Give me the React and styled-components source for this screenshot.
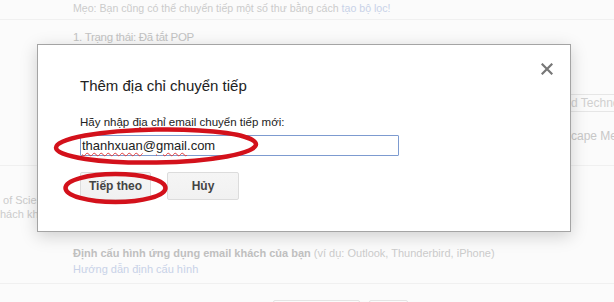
import React from 'react';
import styled, { createGlobalStyle } from 'styled-components';

const GlobalStyle = createGlobalStyle`
  html, body {
    margin: 0;
    padding: 0;
    background: #fafafa;
    overflow: hidden;
  }
  body {
    font-family: "Liberation Sans", Arial, sans-serif;
    width: 614px;
    height: 302px;
  }
`;

const Page = styled.div`
  position: relative;
  width: 614px;
  height: 302px;
  overflow: hidden;
  background: #fbfbfb;
  color: #cbcbcb;
`;

const Row = styled.div`
  display: grid;
  grid-template-columns: 73px 1fr;
  border-bottom: 1px solid ${p => (p.$line ? '#f0f0f0' : 'transparent')};
  height: ${p => p.$h}px;
  box-sizing: border-box;
`;

const Side = styled.div`
  overflow: hidden;
  white-space: nowrap;
  font-size: 11px;
  line-height: 14px;
  padding-top: ${p => p.$top || 0}px;
  color: #cbcbcb;
`;

const Main = styled.div`
  white-space: nowrap;
  padding-top: ${p => p.$top || 0}px;
  font-size: ${p => p.$size || 11}px;
  line-height: ${p => p.$lh || 16}px;
`;

const Link = styled.span`
  color: #c8d2e8;
`;

const Strong = styled.b`
  color: #c0c0c0;
`;

const Heading = styled.div`
  font-size: 11.5px;
  letter-spacing: -0.3px;
  line-height: 16px;
  color: #c3c3c3;
`;

const RightCol = styled.div`
  margin-left: 487px;
  display: flex;
  flex-direction: column;
  white-space: nowrap;
`;

const SelectBox = styled.div`
  height: 18px;
  border: 1px solid #e6e6e6;
  box-sizing: border-box;
  padding-left: 83px;
  font-size: 12px;
  line-height: 16px;
  width: 200px;
  color: #d0d0d0;
`;

const RightText = styled.div`
  margin-top: 17px;
  padding-left: 84px;
  font-size: 12px;
  line-height: 14px;
  color: #c8c8c8;
`;

const Footer = styled.div`
  display: flex;
  gap: 9px;
  padding: 16px 0 0 273px;
`;

const GhostButton = styled.div`
  height: 24px;
  padding: 0 ${p => p.$pad}px;
  border: 1px solid #e4e4e4;
  border-radius: 2px;
  font-size: 12px;
  line-height: 24px;
  color: #cbcbcb;
  background: #fbfbfb;
`;

const Modal = styled.div`
  position: absolute;
  left: 37px;
  top: 44px;
  width: 534px;
  height: 188px;
  box-sizing: border-box;
  background: #fff;
  border: 1px solid #a4a4a4;
  box-shadow: 0 4px 16px rgba(0, 0, 0, 0.18);
  padding: 31px 0 0 42px;
  color: #222;
`;

const Close = styled.div`
  position: absolute;
  right: 17px;
  top: 16px;
  width: 12px;
  height: 12px;
`;

const Title = styled.div`
  font-size: 15px;
  line-height: 20px;
  color: #222;
`;

const Label = styled.div`
  margin-top: 19px;
  font-size: 11.5px;
  line-height: 14px;
  color: #222;
`;

const Input = styled.div`
  margin-top: 6px;
  width: 319px;
  height: 21px;
  box-sizing: border-box;
  border: 1px solid #7d9bd0;
  border-radius: 1px;
  padding-left: 1px;
  font-size: 13px;
  line-height: 19px;
  color: #222;
`;

const Misspelled = styled.span`
  text-decoration: underline wavy #e23a3a;
  text-decoration-thickness: 1px;
  text-underline-offset: 2px;
`;

const Actions = styled.div`
  display: flex;
  gap: 16px;
  margin-top: 16px;
`;

const Button = styled.div`
  width: ${p => p.$w}px;
  height: 28px;
  box-sizing: border-box;
  border: 1px solid #dcdcdc;
  border-radius: 2px;
  background: linear-gradient(#f5f5f5, #f1f1f1);
  font-size: 12px;
  font-weight: bold;
  color: #444;
  display: flex;
  align-items: center;
  justify-content: center;
`;

const Marks = styled.svg`
  position: absolute;
  left: 0;
  top: 0;
  pointer-events: none;
`;

const RightWrap = styled.div`
  position: absolute;
  left: 0;
  top: 94px;
  width: 614px;
`;

function RightLayer() {
  return (
    <RightWrap>
      <RightCol>
        <SelectBox>d Technology</SelectBox>
        <RightText>cape Messages</RightText>
      </RightCol>
    </RightWrap>
  );
}

export default function App() {
  return (
    <>
      <GlobalStyle />
      <Page>
        <Row $h={20} $line>
          <Side />
          <Main $top={-4} $size={10.6}>
            Mẹo: Bạn cũng có thể chuyển tiếp một số thư bằng cách <Link>tạo bộ lọc!</Link>
          </Main>
        </Row>
        <Row $h={146} $line>
          <Side />
          <Main $top={9}>
            <Heading>1. Trạng thái: Đã tắt POP</Heading>
          </Main>
        </Row>
        <Row $h={118} $line>
          <Side $top={27}>
            <div>&nbsp;of Science</div>
            <div>hách khác</div>
          </Side>
          <Main $top={79} $lh={16}>
            <Strong>Định cấu hình ứng dụng email khách của bạn</Strong> (ví dụ: Outlook, Thunderbird, iPhone)
            <div><Link>Hướng dẫn định cấu hình</Link></div>
          </Main>
        </Row>
        <Footer>
          <GhostButton $pad={9}>Lưu thay đổi</GhostButton>
          <GhostButton $pad={8}>Hủy</GhostButton>
        </Footer>

        <RightLayer />

        <Modal>
          <Close>
            <svg width="12" height="12" viewBox="0 0 12 12">
              <path d="M1.5 1.5 L10.5 10.5 M10.5 1.5 L1.5 10.5" stroke="#777" strokeWidth="2.2" strokeLinecap="square" />
            </svg>
          </Close>
          <Title>Thêm địa chỉ chuyển tiếp</Title>
          <Label>Hãy nhập địa chỉ email chuyển tiếp mới:</Label>
          <Input>
            <Misspelled>thanhxuan</Misspelled>@<Misspelled>gmail</Misspelled>.com
          </Input>
          <Actions>
            <Button $w={71}>Tiếp theo</Button>
            <Button $w={72}>Hủy</Button>
          </Actions>
        </Modal>

        <Marks width="614" height="302" viewBox="0 0 614 302">
          <ellipse cx="156" cy="146" rx="100" ry="16.5" fill="none" stroke="#d3111b" strokeWidth="4.5" transform="rotate(-1 156 146)" />
          <ellipse cx="115.5" cy="188" rx="50" ry="14" fill="none" stroke="#d3111b" strokeWidth="4.5" />
        </Marks>
      </Page>
    </>
  );
}
